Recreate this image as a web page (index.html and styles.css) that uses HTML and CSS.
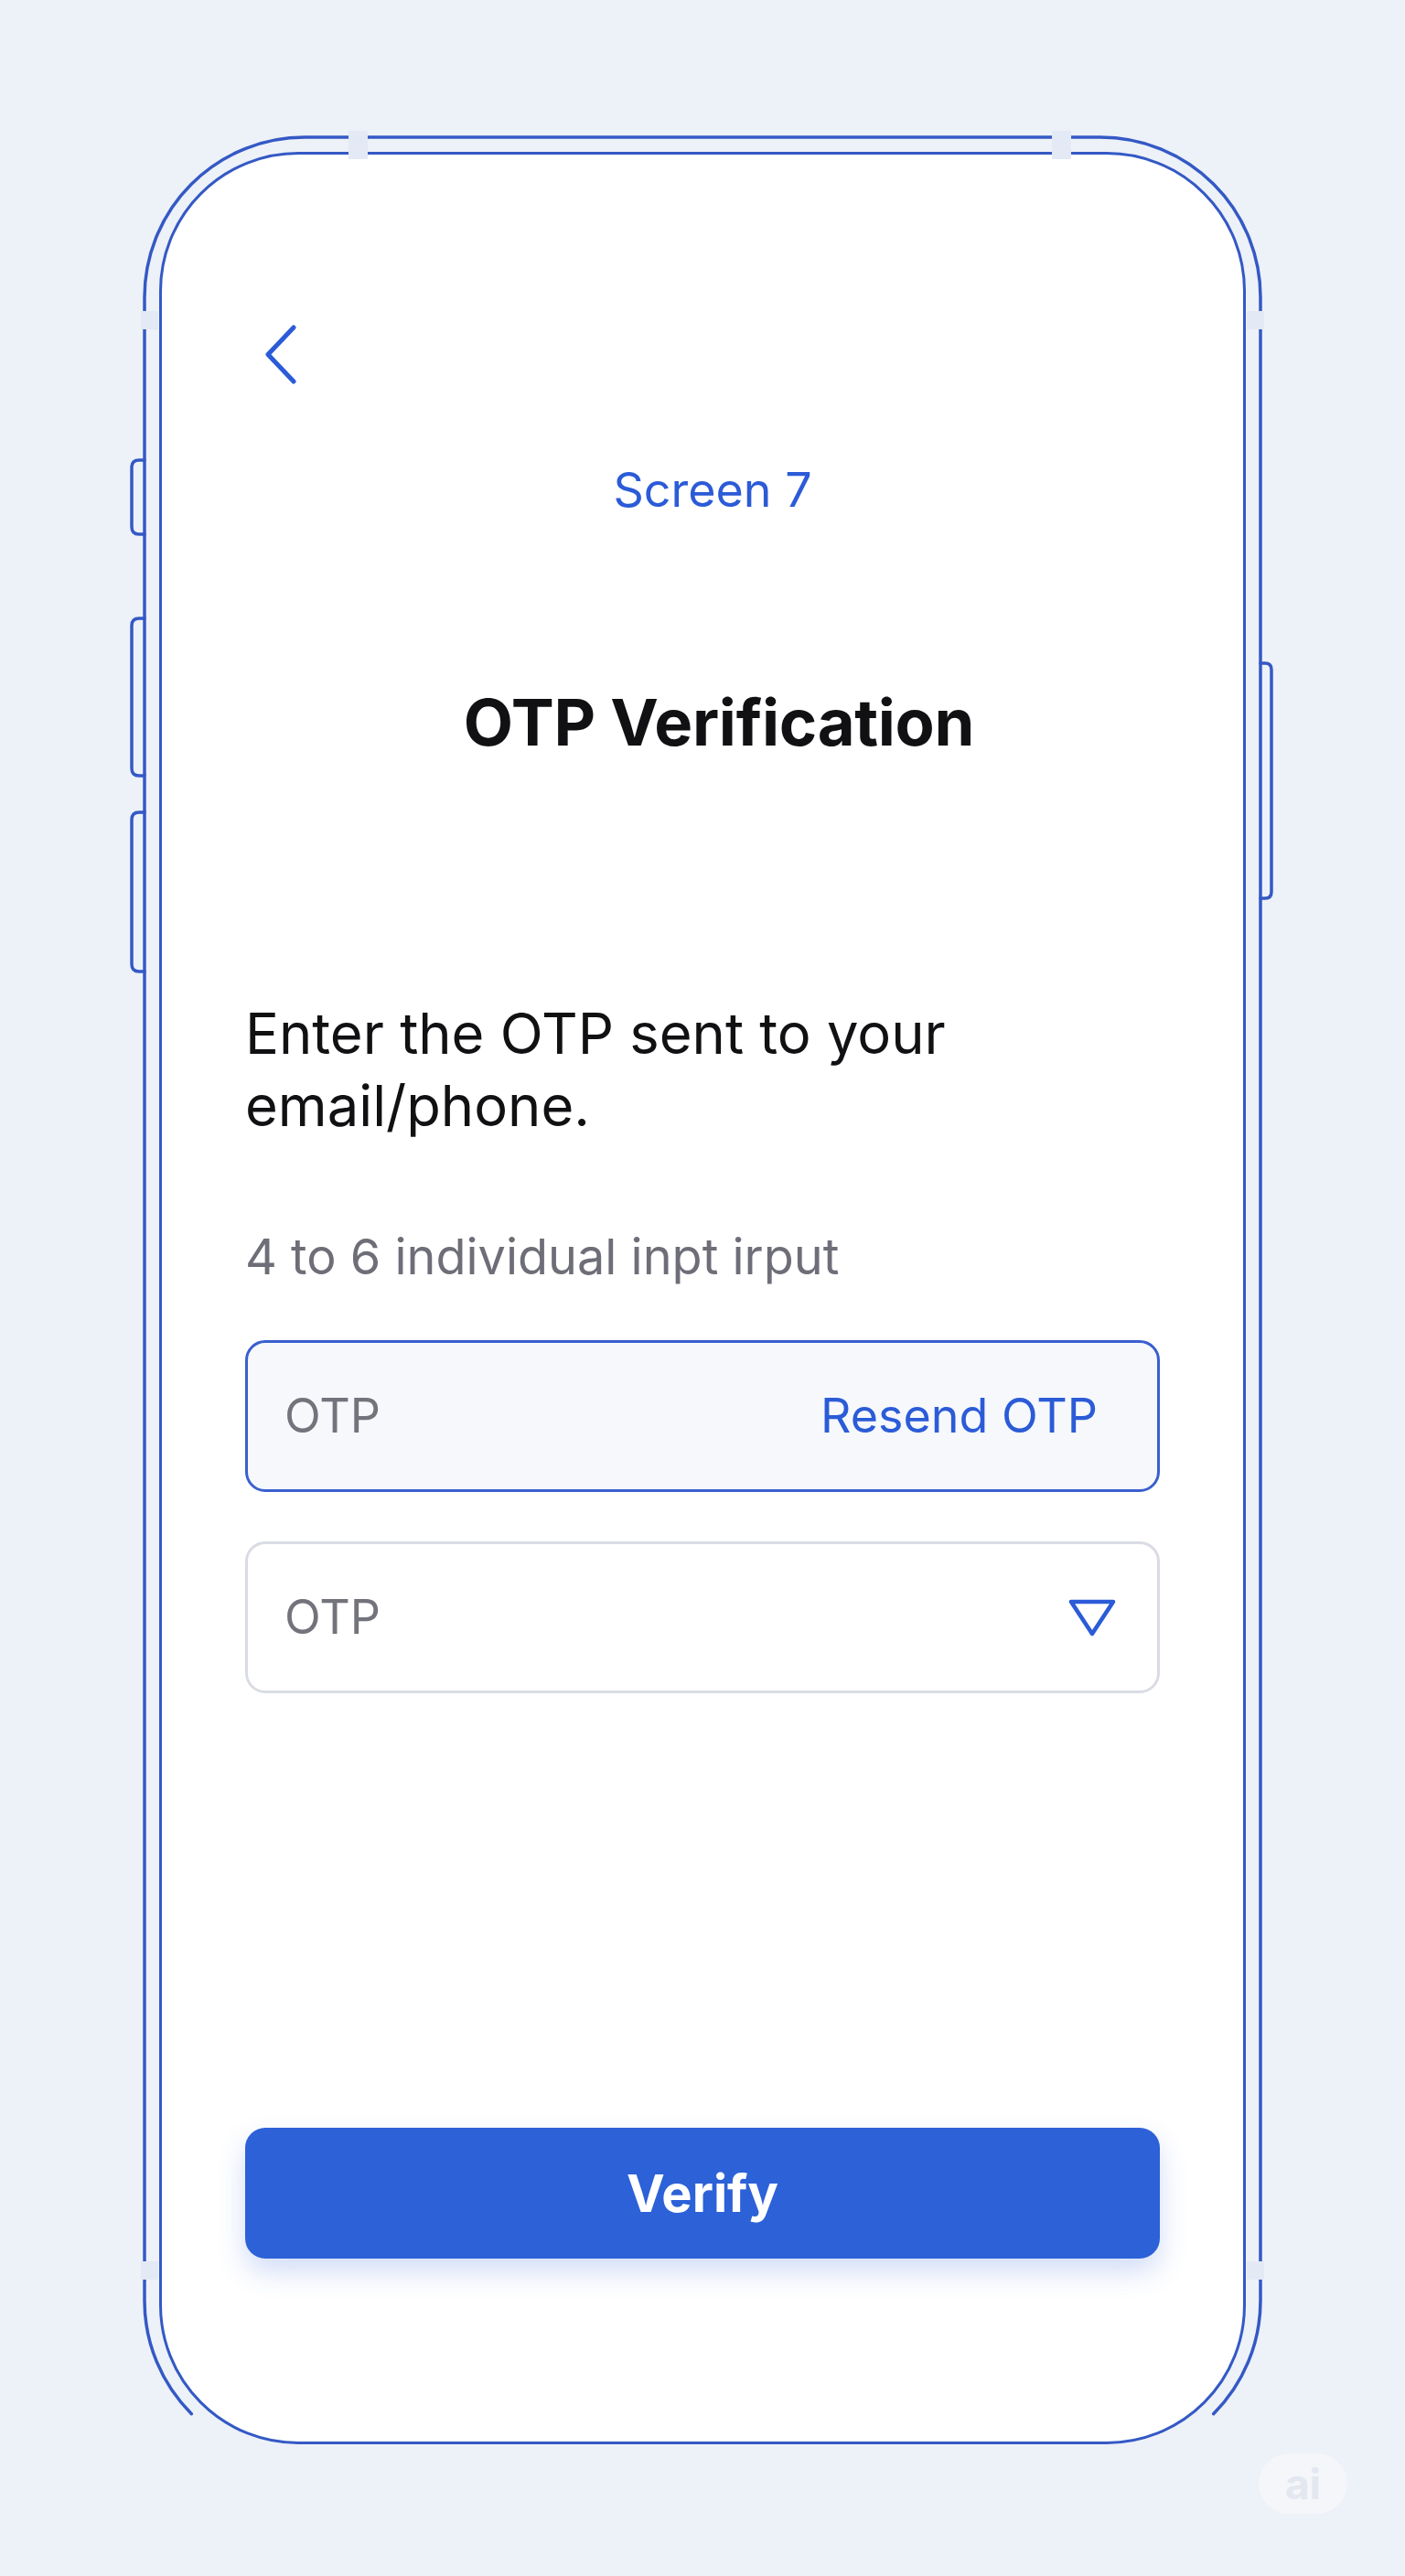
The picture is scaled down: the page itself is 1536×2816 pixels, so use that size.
FILE: index.html
```html
<!DOCTYPE html>
<html lang="en">
<head>
<meta charset="utf-8">
<title>OTP Verification</title>
<link rel="stylesheet" href="styles.css">
</head>
<body>
<div class="stage">
  <div class="phone">
    <svg class="frame" viewBox="134 126 1268 2586" width="1268" height="2586" aria-hidden="true">
      <g fill="none" stroke="#3459C5" stroke-width="3.5" stroke-linecap="round">
        <path d="M 209.3 2638.7 A 175 175 0 0 1 158 2515 L 158 325 A 175 175 0 0 1 333 150 L 1203 150 A 175 175 0 0 1 1378 325 L 1378 2515 A 175 175 0 0 1 1326.7 2638.7"/>
        <path d="M 158 503 L 152 503 Q 144 503 144 511 L 144 576 Q 144 584 152 584 L 158 584"/>
        <path d="M 158 676 L 152 676 Q 144 676 144 684 L 144 840 Q 144 848 152 848 L 158 848"/>
        <path d="M 158 888 L 152 888 Q 144 888 144 896 L 144 1054 Q 144 1062 152 1062 L 158 1062"/>
        <path d="M 1378 725 L 1383 725 Q 1390 725 1390 732 L 1390 975 Q 1390 982 1383 982 L 1378 982"/>
      </g>
      <g fill="#E3E9F5">
        <rect x="381" y="143" width="21" height="31"/>
        <rect x="1150" y="143" width="21" height="31"/>
        <rect x="154" y="340" width="19" height="20"/>
        <rect x="1363" y="340" width="19" height="20"/>
        <rect x="154" y="2472" width="19" height="20"/>
        <rect x="1363" y="2472" width="19" height="20"/>
      </g>
    </svg>

    <button class="back" type="button" aria-label="Back">
      <svg viewBox="0 0 36 66" width="36" height="66" aria-hidden="true">
        <polyline points="32,3 4,32.5 32,62" fill="none" stroke="#2B5BD7" stroke-width="5" stroke-linecap="round" stroke-linejoin="round"/>
      </svg>
    </button>

    <div class="screen-label">Screen 7</div>
    <h1 class="title">OTP Verification</h1>
    <p class="lead">Enter the OTP sent to your email/phone.</p>
    <p class="hint">4 to 6 individual inpt irput</p>

    <div class="field field-active">
      <span class="placeholder">OTP</span>
      <span class="resend">Resend OTP</span>
    </div>

    <div class="field field-select">
      <span class="placeholder">OTP</span>
      <svg class="caret" viewBox="0 0 56 42" width="56" height="42" aria-hidden="true">
        <path d="M 5 4 L 51 4 L 28 39 Z" fill="none" stroke="#2B5BD7" stroke-width="4.5" stroke-linejoin="round"/>
      </svg>
    </div>

    <button class="verify" type="button">Verify</button>
  </div>

  <div class="badge-row"><span class="badge">ai</span></div>
</div>
</body>
</html>
```

FILE: styles.css
```css
html, body {
  margin: 0;
  padding: 0;
}

body {
  background: #EDF1F8;
  font-family: Inter, "Noto Sans", "Liberation Sans", sans-serif;
  color: #111114;
}

.stage {
  box-sizing: border-box;
  width: 1536px;
  height: 2816px;
  padding: 166px 0 0 174px;
  overflow: hidden;
}

.phone {
  position: relative;
  box-sizing: border-box;
  width: 1188px;
  height: 2506px;
  border: 3.5px solid #3459C5;
  border-radius: 152px;
  background: #FFFFFF;
  display: flex;
  flex-direction: column;
  padding: 186px 91px 200px;
}

.frame {
  position: absolute;
  left: -43px;
  top: -43px;
  pointer-events: none;
  overflow: visible;
}

.back {
  align-self: flex-start;
  margin: 0 0 0 21px;
  padding: 0;
  border: 0;
  background: none;
  width: 36px;
  height: 66px;
  display: block;
}

.back svg {
  display: block;
}

.screen-label {
  margin-top: 83px;
  padding-left: 22px;
  text-align: center;
  font-size: 52px;
  line-height: 64px;
  font-weight: 400;
  color: #2B5BD7;
}

.title {
  margin: 180px 0 0;
  padding-left: 36px;
  text-align: center;
  font-size: 70.5px;
  line-height: 84px;
  font-weight: 700;
  color: #111114;
  letter-spacing: -0.3px;
}

.lead {
  margin: 258px 0 0;
  font-size: 61.5px;
  line-height: 79px;
  font-weight: 400;
  color: #111114;
}

.hint {
  margin: 93px 0 0;
  font-size: 54px;
  line-height: 66px;
  font-weight: 400;
  color: #6E6E78;
}

.field {
  box-sizing: border-box;
  height: 166px;
  border-radius: 22px;
  border: 3px solid #D9DCE3;
  background: #FFFFFF;
  display: flex;
  align-items: center;
  justify-content: space-between;
  padding: 0 43px 0 40px;
  font-size: 52px;
  line-height: 64px;
}

.field-active {
  margin-top: 58px;
  border-color: #3A5FCF;
  background: #F6F8FC;
  padding-right: 65px;
}

.field-select {
  margin-top: 54px;
}

.placeholder {
  color: #73737C;
}

.resend {
  color: #2B5BD7;
}

.caret {
  display: block;
}

.verify {
  margin-top: auto;
  height: 143px;
  border: 0;
  border-radius: 22px;
  background: #2C61D8;
  color: #FFFFFF;
  font-family: Inter, "Noto Sans", "Liberation Sans", sans-serif;
  font-size: 56px;
  font-weight: 700;
  box-shadow: 0 14px 30px rgba(44, 97, 216, 0.22);
}

.badge-row {
  display: flex;
  padding-left: 1202px;
  margin-top: 10px;
}

.badge {
  width: 97px;
  height: 66px;
  border-radius: 33px;
  background: #F4F6FA;
  color: #E3E7EF;
  font-size: 46px;
  font-weight: 700;
  line-height: 66px;
  text-align: center;
}
```
